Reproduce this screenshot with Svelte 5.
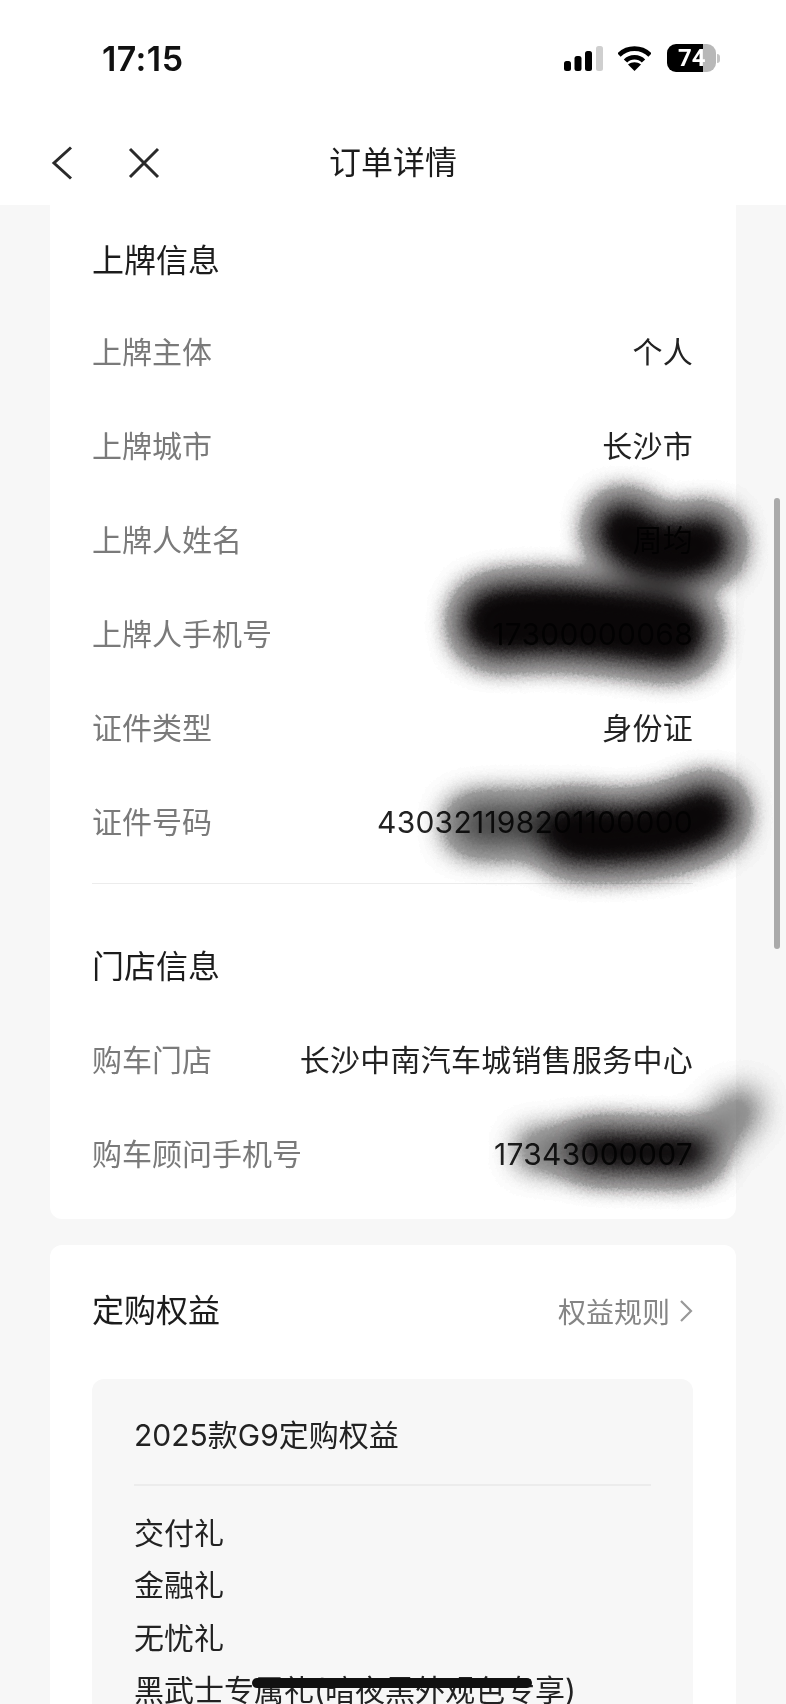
<script>
  const plate = [
    { k: '上牌主体', v: '个人' },
    { k: '上牌城市', v: '长沙市' },
    { k: '上牌人姓名', v: '周均' },
    { k: '上牌人手机号', v: '17300000068' },
    { k: '证件类型', v: '身份证' },
    { k: '证件号码', v: '430321198201100000' }
  ];
  const store = [
    { k: '购车门店', v: '长沙中南汽车城销售服务中心' },
    { k: '购车顾问手机号', v: '17343000007' }
  ];
  const gifts = ['交付礼', '金融礼', '无忧礼', '黑武士专属礼(暗夜黑外观色专享)'];
</script>

<div class="page">
  <header class="top">
    <div class="status">
      <span class="time">17:15</span>
      <div class="icons">
        <svg class="signal" width="39" height="25" viewBox="0 0 39 25">
          <rect x="0" y="15" width="7" height="10" rx="2.5" fill="#000"/>
          <rect x="10.500" y="10" width="7" height="15" rx="2.500" fill="#000"/>
          <rect x="21" y="5" width="7" height="20" rx="2.500" fill="#000"/>
          <rect x="32" y="0" width="7" height="25" rx="2.500" fill="#cfcfcf"/>
        </svg>
        <svg class="wifi" width="33" height="25" viewBox="0 0 33 25">
          <path d="M1 9C9.500 .5 23.500 .5 32 9" fill="none" stroke="#000" stroke-width="4.600"/>
          <path d="M7.500 15C12 10 21 10 25.500 15" fill="none" stroke="#000" stroke-width="4.600"/>
          <path d="M16.500 25L10 18.500C14 15.500 19 15.500 23 18.500Z" fill="#000"/>
        </svg>
        <div class="battery"><span>74</span></div>
        <div class="nub"></div>
      </div>
    </div>
    <nav class="nav">
      <svg class="back" width="22" height="34" viewBox="0 0 22 34">
        <path d="M20 1.500L3 17L20 32.500" fill="none" stroke="#2a2a2a" stroke-width="3"/>
      </svg>
      <svg class="close" width="32" height="32" viewBox="0 0 32 32">
        <path d="M2 2L30 30M30 2L2 30" fill="none" stroke="#2a2a2a" stroke-width="3"/>
      </svg>
      <h1>订单详情</h1>
    </nav>
  </header>

  <main class="scroll">
    <section class="card first">
      <h2 class="head-a">上牌信息</h2>
      {#each plate as r}
        <div class="row"><span class="k">{r.k}</span><span class="v">{r.v}</span></div>
      {/each}
      <div class="rule"></div>
      <h2 class="head-b">门店信息</h2>
      {#each store as r}
        <div class="row"><span class="k">{r.k}</span><span class="v">{r.v}</span></div>
      {/each}
    </section>

    <section class="card second">
      <div class="benefit-head">
        <h2>定购权益</h2>
        <div class="rules">
          <span>权益规则</span>
          <svg width="14" height="24" viewBox="0 0 14 24">
            <path d="M2 2L12 12L2 22" fill="none" stroke="#999" stroke-width="2.200"/>
          </svg>
        </div>
      </div>
      <div class="inner">
        <div class="inner-title">2025款G9定购权益</div>
        <ul>
          {#each gifts as g}<li>{g}</li>{/each}
        </ul>
      </div>
    </section>
  </main>

  <div class="scrollbar"></div>

  <svg class="ink" width="786" height="1704" viewBox="0 0 786 1704">
    <defs>
      <filter id="brush" x="-30%" y="-80%" width="160%" height="260%" color-interpolation-filters="sRGB">
        <feGaussianBlur stdDeviation="16" result="b"/>
        <feComponentTransfer in="b" result="c">
          <feFuncA type="table" tableValues="0 0.4 0.52 0.64 0.76 0.88 0.97 1 1"/>
        </feComponentTransfer>
        <feTurbulence type="fractalNoise" baseFrequency="0.4" numOctaves="2" seed="4" result="n"/>
        <feDisplacementMap in="c" in2="n" scale="5" xChannelSelector="R" yChannelSelector="G"/>
      </filter>
    </defs>
    <g filter="url(#brush)" fill="none" stroke-linecap="round" stroke-linejoin="round">
      <path d="M624 530C632 552 690 556 704 544" stroke="#0a0708" stroke-width="56"/>
      <path d="M496 622C560 614 620 625 674 632" stroke="#0a0708" stroke-width="68"/>
      <path d="M474 825L590 825" stroke="#000" stroke-width="46" stroke-opacity=".5"/>
      <path d="M572 835C620 838 670 835 708 814" stroke="#0a0708" stroke-width="56"/>
      <path d="M741 1108L712 1138" stroke="#000" stroke-width="34" stroke-opacity=".24"/>
      <path d="M534 1150L590 1150" stroke="#000" stroke-width="28" stroke-opacity=".36"/>
      <path d="M590 1151L694 1153" stroke="#0a0708" stroke-width="36"/>
    </g>
  </svg>

  <div class="home"></div>
</div>

<style>
  :global(body) {
    margin: 0;
    background: #f7f7f7;
  }
  .page {
    position: relative;
    width: 786px;
    height: 1704px;
    overflow: hidden;
    font-family: Inter, "Noto Sans CJK SC", sans-serif;
    color: #222;
  }
  .top {
    height: 205px;
    background: #fff;
    display: flex;
    flex-direction: column;
  }
  .status {
    height: 117px;
    display: flex;
    justify-content: space-between;
    padding: 45px 66px 0 102px;
    box-sizing: border-box;
  }
  .time {
    font-family: Inter, sans-serif;
    font-size: 34px;
    font-weight: 600;
    line-height: 28px;
    letter-spacing: 0.4px;
    color: #111;
  }
  .icons {
    display: flex;
    align-items: flex-start;
    height: 28px;
    margin-top: -1px;
  }
  .signal { margin-top: 2px; margin-right: 15px; }
  .wifi { margin-top: 2px; margin-right: 16px; }
  .battery {
    width: 49px;
    height: 28px;
    border-radius: 9px;
    background: linear-gradient(90deg, #000 36px, #b8b8b8 36px);
    box-sizing: border-box;
    padding-left: 11px;
    font-family: Roboto, sans-serif;
    font-weight: 700;
    font-size: 24px;
    line-height: 28px;
    color: #fff;
  }
  .nub {
    width: 3px;
    height: 9px;
    margin: 10px 0 0 1px;
    border-radius: 0 3px 3px 0;
    background: #c4c4c4;
  }
  .nav {
    position: relative;
    height: 88px;
    display: flex;
    align-items: center;
  }
  .back { margin: 3px 0 0 51px; }
  .close { margin: 3px 0 0 55px; }
  h1 {
    position: absolute;
    left: 0;
    right: 0;
    top: 23px;
    margin: 0;
    text-align: center;
    font-size: 32px;
    font-weight: 400;
    line-height: 46px;
    color: #1c1c1c;
  }
  .scroll {
    height: 1499px;
    overflow: hidden;
    display: flex;
    flex-direction: column;
    gap: 26px;
    padding: 0 50px;
    box-sizing: border-box;
  }
  .card {
    background: #fff;
    padding: 0 43px 0 42px;
    flex: none;
  }
  .first {
    border-radius: 0 0 12px 12px;
    padding-bottom: 18px;
  }
  .second {
    border-radius: 12px 12px 0 0;
    padding-top: 34px;
    padding-bottom: 40px;
  }
  h2 {
    margin: 0;
    font-size: 32px;
    font-weight: 400;
    line-height: 46px;
    color: #1c1c1c;
  }
  .head-a { padding: 33px 0 21px; }
  .head-b { padding: 60px 0 23px; }
  .row {
    height: 94px;
    display: flex;
    justify-content: space-between;
    align-items: center;
    font-size: 30px;
    line-height: 44px;
  }
  .k { color: #7a7a7a; }
  .v { color: #222; letter-spacing: 0.25px; }
  .rule {
    height: 1px;
    background: #ececec;
    margin-top: 14px;
  }
  .benefit-head {
    height: 64px;
    display: flex;
    justify-content: space-between;
    align-items: center;
    margin-bottom: 36px;
  }
  .rules {
    display: flex;
    align-items: center;
    gap: 9px;
    font-size: 28px;
    color: #858585;
  }
  .inner {
    background: #f7f7f7;
    border-radius: 12px;
    padding: 33px 42px 0;
  }
  .inner-title {
    height: 72px;
    font-size: 30px;
    line-height: 46px;
    color: #222;
    border-bottom: 2px solid #ececec;
  }
  ul {
    list-style: none;
    margin: 0;
    padding: 21px 0 0;
  }
  li {
    height: 52.300px;
    font-size: 30px;
    line-height: 52.300px;
    color: #222;
    white-space: nowrap;
  }
  .scrollbar {
    position: absolute;
    left: 774px;
    top: 498px;
    width: 6px;
    height: 451px;
    border-radius: 3px;
    background: #aaa;
  }
  .ink {
    position: absolute;
    left: 0;
    top: 0;
    mix-blend-mode: multiply;
    pointer-events: none;
  }
  .home {
    position: absolute;
    left: 252px;
    top: 1678px;
    width: 280px;
    height: 10px;
    border-radius: 5px;
    background: #111;
  }
</style>
